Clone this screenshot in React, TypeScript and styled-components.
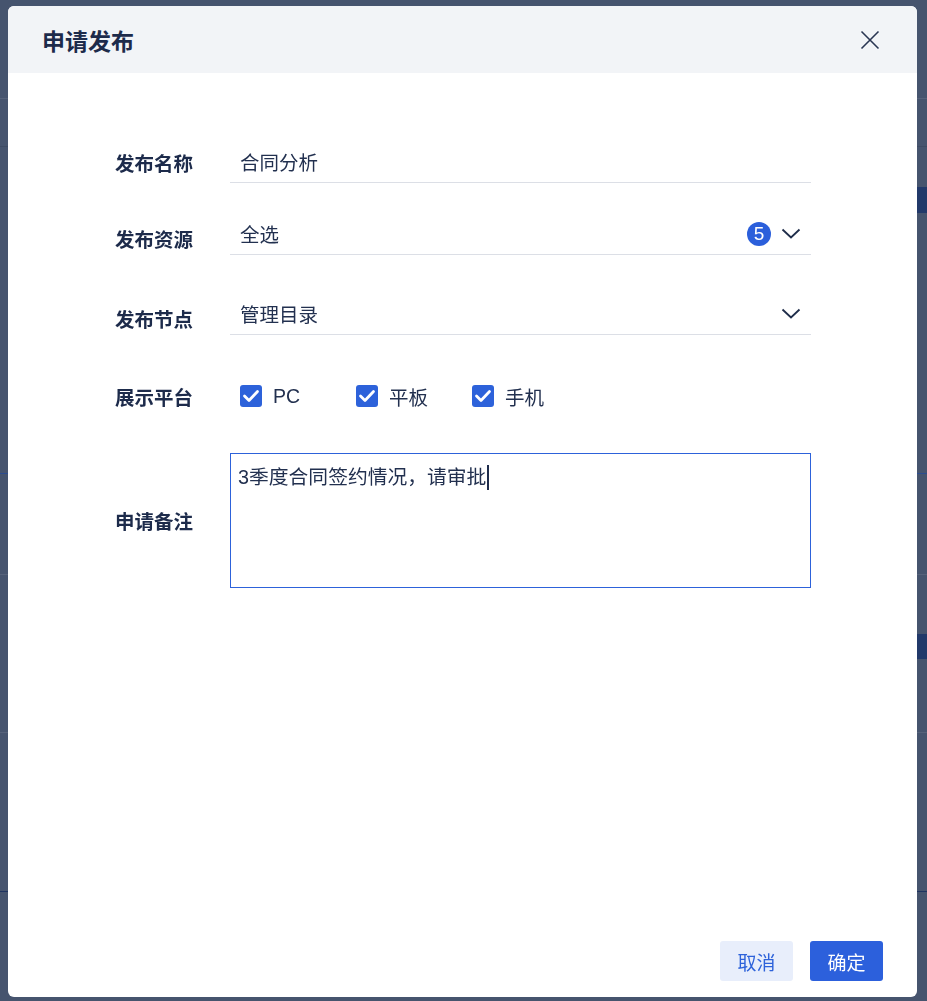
import React from "react"
import styled, { createGlobalStyle } from "styled-components"

const GlobalStyle = createGlobalStyle`
  html, body {
    margin: 0;
    padding: 0;
    height: 100%;
    background: #46546e;
    font-family: "Liberation Sans", "Noto Sans CJK SC", sans-serif;
  }
  * { box-sizing: border-box; }
`

const bgRows: { h: number; line?: string; bar?: boolean }[] = [
  { h: 99, line: "#56627a" },
  { h: 48, line: "#3e4b64" },
  { h: 9 },
  { h: 31 },
  { h: 26, bar: true },
  { h: 261, line: "#2c4c8f" },
  { h: 101, line: "#56627a" },
  { h: 59 },
  { h: 25, bar: true },
  { h: 74, line: "#56627a" },
  { h: 159, line: "#1f3360" },
]

const primary = "#2d62da"
const textColor = "#1d2b4b"

export default function App() {
  return (
    <>
      <GlobalStyle />
      <Backdrop>
        {bgRows.map((r, i) => (
          <BgRow key={i} $h={r.h} $line={r.line}>
            {r.bar && <BgBar />}
          </BgRow>
        ))}
      </Backdrop>
      <Overlay>
        <Modal>
          <Header>
            <Title>申请发布</Title>
            <CloseButton aria-label="关闭">
              <svg width="20" height="20" viewBox="0 0 20 20">
                <path d="M1.5 1.5 L18.5 18.5 M18.5 1.5 L1.5 18.5" stroke="#2a3652" strokeWidth="1.6" fill="none" />
              </svg>
            </CloseButton>
          </Header>

          <Body>
            <Row $mt={0}>
              <Label>发布名称</Label>
              <Field>
                <Value>合同分析</Value>
              </Field>
            </Row>

            <Row $mt={30}>
              <Label $shift={4}>发布资源</Label>
              <Field>
                <Value>全选</Value>
                <Badge>5</Badge>
                <Chevron />
              </Field>
            </Row>

            <Row $mt={38}>
              <Label $shift={4}>发布节点</Label>
              <Field>
                <Value>管理目录</Value>
                <Chevron />
              </Field>
            </Row>

            <Row $mt={46}>
              <Label>展示平台</Label>
              <Checks>
                {["PC", "平板", "手机"].map((p) => (
                  <CheckItem key={p}>
                    <CheckBox>
                      <svg width="20" height="20" viewBox="0 0 20 20">
                        <path d="M3.5 10 L8 14.5 L16.5 5.5" stroke="#fff" strokeWidth="2.8" fill="none" strokeLinecap="round" strokeLinejoin="round" />
                      </svg>
                    </CheckBox>
                    <CheckText>{p}</CheckText>
                  </CheckItem>
                ))}
              </Checks>
            </Row>

            <Row $mt={42}>
              <Label>申请备注</Label>
              <TextArea>
                <TextLine>
                  3季度合同签约情况，请审批<Caret />
                </TextLine>
              </TextArea>
            </Row>
          </Body>

          <Footer>
            <Button $variant="secondary">取消</Button>
            <Button $variant="primary">确定</Button>
          </Footer>
        </Modal>
      </Overlay>
    </>
  )
}

function Chevron() {
  return (
    <ChevronIcon width="20" height="11" viewBox="0 0 20 11">
      <path d="M1.5 1.5 L10 9.5 L18.5 1.5" stroke="#1f2d4a" strokeWidth="1.8" fill="none" />
    </ChevronIcon>
  )
}

const Backdrop = styled.div`
  position: fixed;
  inset: 0;
  display: flex;
  flex-direction: column;
`

const BgRow = styled.div<{ $h: number; $line?: string }>`
  height: ${({ $h }) => $h}px;
  flex-shrink: 0;
  display: flex;
  justify-content: flex-end;
  border-bottom: ${({ $line }) => ($line ? `1px solid ${$line}` : "none")};
`

const BgBar = styled.div`
  width: 60px;
  height: 100%;
  background: #22396a;
`

const Overlay = styled.div`
  position: fixed;
  inset: 0;
  padding: 6px 10px 4px 8px;
  display: flex;
`

const Modal = styled.div`
  flex: 1;
  background: #fff;
  border-radius: 6px;
  overflow: hidden;
  display: flex;
  flex-direction: column;
`

const Header = styled.div`
  height: 67px;
  background: #f2f4f7;
  display: flex;
  align-items: center;
  justify-content: space-between;
  padding: 0 37px 0 34px;
`

const Title = styled.h2`
  margin: 0;
  font-size: 23px;
  font-weight: 700;
  color: ${textColor};
`

const CloseButton = styled.button`
  border: none;
  background: transparent;
  padding: 0;
  display: flex;
  cursor: pointer;
`

const Body = styled.div`
  flex: 1;
  padding: 68px 106px 0 107px;
  display: flex;
  flex-direction: column;
`

const Row = styled.div<{ $mt: number }>`
  display: flex;
  align-items: center;
  margin-top: ${({ $mt }) => $mt}px;
`

const Label = styled.div<{ $shift?: number }>`
  width: 115px;
  flex-shrink: 0;
  font-size: 19.5px;
  font-weight: 700;
  color: ${textColor};
  padding-top: ${({ $shift }) => ($shift ? $shift * 2 : 0)}px;
`

const Field = styled.div`
  flex: 1;
  height: 42px;
  border-bottom: 1px solid #dcdfe6;
  display: flex;
  align-items: center;
  padding: 0 10px;
`

const Value = styled.span`
  flex: 1;
  font-size: 19.5px;
  color: #22304f;
`

const Badge = styled.span`
  width: 24px;
  height: 24px;
  border-radius: 50%;
  background: #2b5fdb;
  color: #fff;
  font-size: 19px;
  display: flex;
  align-items: center;
  justify-content: center;
  margin-right: 10px;
`

const ChevronIcon = styled.svg`
  display: block;
  flex-shrink: 0;
`

const Checks = styled.div`
  display: flex;
  align-items: center;
  height: 30px;
  padding-left: 10px;
`

const CheckItem = styled.label`
  display: flex;
  align-items: center;
  width: 116px;
`

const CheckBox = styled.span`
  width: 22px;
  height: 22px;
  border-radius: 3px;
  background: ${primary};
  display: flex;
  align-items: center;
  justify-content: center;
  margin-right: 11px;
`

const CheckText = styled.span`
  font-size: 19.5px;
  color: #22304f;
`

const TextArea = styled.div`
  flex: 1;
  height: 135px;
  border: 1px solid ${primary};
  padding: 10px 7px;
`

const TextLine = styled.div`
  font-size: 19.8px;
  line-height: 26px;
  color: #22304f;
  display: flex;
  align-items: center;
`

const Caret = styled.span`
  display: inline-block;
  width: 2px;
  height: 25px;
  background: #1d2b4b;
  margin-left: 1px;
`

const Footer = styled.div`
  display: flex;
  justify-content: flex-end;
  gap: 17px;
  padding: 0 34px 16px;
`

const Button = styled.button<{ $variant: "primary" | "secondary" }>`
  height: 40px;
  min-width: 73px;
  padding: 0 16px;
  border: none;
  border-radius: 3px;
  font-family: inherit;
  font-size: 19px;
  cursor: pointer;
  background: ${({ $variant }) => ($variant === "primary" ? "#2c60dc" : "#e8eefb")};
  color: ${({ $variant }) => ($variant === "primary" ? "#fff" : primary)};
`
